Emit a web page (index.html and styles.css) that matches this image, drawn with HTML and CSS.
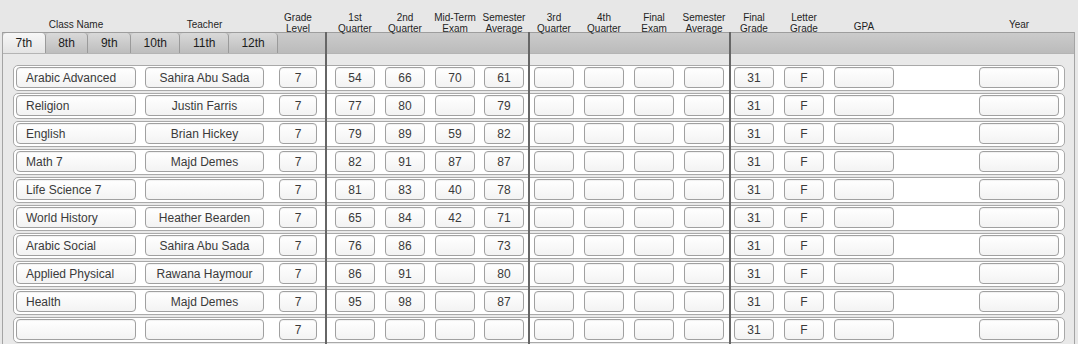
FILE: index.html
```html
<!DOCTYPE html>
<html>
<head>
<meta charset="utf-8">
<link rel="stylesheet" href="styles.css">
</head>
<body>
<div class="sheet">
  <div class="head cols">
    <div class="h one c-name">Class Name</div>
    <div class="h one c-teacher">Teacher</div>
    <div class="h two c-grade"><span>Grade</span><span>Level</span></div>
    <div class="h two c-num"><span>1st</span><span>Quarter</span></div>
    <div class="h two c-num"><span>2nd</span><span>Quarter</span></div>
    <div class="h two c-num"><span>Mid-Term</span><span>Exam</span></div>
    <div class="h two c-num"><span>Semester</span><span>Average</span></div>
    <div class="h two c-num"><span>3rd</span><span>Quarter</span></div>
    <div class="h two c-num"><span>4th</span><span>Quarter</span></div>
    <div class="h two c-num"><span>Final</span><span>Exam</span></div>
    <div class="h two c-num"><span>Semester</span><span>Average</span></div>
    <div class="h two c-num"><span>Final</span><span>Grade</span></div>
    <div class="h two c-num"><span>Letter</span><span>Grade</span></div>
    <div class="h low c-gpa">GPA</div>
    <div class="h one c-year">Year</div>
  </div>

  <div class="panel">
    <div class="tabs">
      <div class="tab active">7th</div>
      <div class="tab">8th</div>
      <div class="tab">9th</div>
      <div class="tab">10th</div>
      <div class="tab">11th</div>
      <div class="tab">12th</div>
      <div class="tab-fill"></div>
    </div>

    <div class="rows">
      <div class="row cols">
        <div class="f left c-name">Arabic Advanced</div><div class="f c-teacher">Sahira Abu Sada</div><div class="f c-grade">7</div>
        <div class="f c-num">54</div><div class="f c-num">66</div><div class="f c-num">70</div><div class="f c-num">61</div>
        <div class="f c-num"></div><div class="f c-num"></div><div class="f c-num"></div><div class="f c-num"></div>
        <div class="f c-num">31</div><div class="f c-num">F</div><div class="f c-gpa"></div><div class="f c-year"></div>
      </div>
      <div class="row cols">
        <div class="f left c-name">Religion</div><div class="f c-teacher">Justin Farris</div><div class="f c-grade">7</div>
        <div class="f c-num">77</div><div class="f c-num">80</div><div class="f c-num"></div><div class="f c-num">79</div>
        <div class="f c-num"></div><div class="f c-num"></div><div class="f c-num"></div><div class="f c-num"></div>
        <div class="f c-num">31</div><div class="f c-num">F</div><div class="f c-gpa"></div><div class="f c-year"></div>
      </div>
      <div class="row cols">
        <div class="f left c-name">English</div><div class="f c-teacher">Brian Hickey</div><div class="f c-grade">7</div>
        <div class="f c-num">79</div><div class="f c-num">89</div><div class="f c-num">59</div><div class="f c-num">82</div>
        <div class="f c-num"></div><div class="f c-num"></div><div class="f c-num"></div><div class="f c-num"></div>
        <div class="f c-num">31</div><div class="f c-num">F</div><div class="f c-gpa"></div><div class="f c-year"></div>
      </div>
      <div class="row cols">
        <div class="f left c-name">Math 7</div><div class="f c-teacher">Majd Demes</div><div class="f c-grade">7</div>
        <div class="f c-num">82</div><div class="f c-num">91</div><div class="f c-num">87</div><div class="f c-num">87</div>
        <div class="f c-num"></div><div class="f c-num"></div><div class="f c-num"></div><div class="f c-num"></div>
        <div class="f c-num">31</div><div class="f c-num">F</div><div class="f c-gpa"></div><div class="f c-year"></div>
      </div>
      <div class="row cols">
        <div class="f left c-name">Life Science 7</div><div class="f c-teacher"></div><div class="f c-grade">7</div>
        <div class="f c-num">81</div><div class="f c-num">83</div><div class="f c-num">40</div><div class="f c-num">78</div>
        <div class="f c-num"></div><div class="f c-num"></div><div class="f c-num"></div><div class="f c-num"></div>
        <div class="f c-num">31</div><div class="f c-num">F</div><div class="f c-gpa"></div><div class="f c-year"></div>
      </div>
      <div class="row cols">
        <div class="f left c-name">World History</div><div class="f c-teacher">Heather Bearden</div><div class="f c-grade">7</div>
        <div class="f c-num">65</div><div class="f c-num">84</div><div class="f c-num">42</div><div class="f c-num">71</div>
        <div class="f c-num"></div><div class="f c-num"></div><div class="f c-num"></div><div class="f c-num"></div>
        <div class="f c-num">31</div><div class="f c-num">F</div><div class="f c-gpa"></div><div class="f c-year"></div>
      </div>
      <div class="row cols">
        <div class="f left c-name">Arabic Social</div><div class="f c-teacher">Sahira Abu Sada</div><div class="f c-grade">7</div>
        <div class="f c-num">76</div><div class="f c-num">86</div><div class="f c-num"></div><div class="f c-num">73</div>
        <div class="f c-num"></div><div class="f c-num"></div><div class="f c-num"></div><div class="f c-num"></div>
        <div class="f c-num">31</div><div class="f c-num">F</div><div class="f c-gpa"></div><div class="f c-year"></div>
      </div>
      <div class="row cols">
        <div class="f left c-name">Applied Physical</div><div class="f c-teacher">Rawana Haymour</div><div class="f c-grade">7</div>
        <div class="f c-num">86</div><div class="f c-num">91</div><div class="f c-num"></div><div class="f c-num">80</div>
        <div class="f c-num"></div><div class="f c-num"></div><div class="f c-num"></div><div class="f c-num"></div>
        <div class="f c-num">31</div><div class="f c-num">F</div><div class="f c-gpa"></div><div class="f c-year"></div>
      </div>
      <div class="row cols">
        <div class="f left c-name">Health</div><div class="f c-teacher">Majd Demes</div><div class="f c-grade">7</div>
        <div class="f c-num">95</div><div class="f c-num">98</div><div class="f c-num"></div><div class="f c-num">87</div>
        <div class="f c-num"></div><div class="f c-num"></div><div class="f c-num"></div><div class="f c-num"></div>
        <div class="f c-num">31</div><div class="f c-num">F</div><div class="f c-gpa"></div><div class="f c-year"></div>
      </div>
      <div class="row cols">
        <div class="f left c-name"></div><div class="f c-teacher"></div><div class="f c-grade">7</div>
        <div class="f c-num"></div><div class="f c-num"></div><div class="f c-num"></div><div class="f c-num"></div>
        <div class="f c-num"></div><div class="f c-num"></div><div class="f c-num"></div><div class="f c-num"></div>
        <div class="f c-num">31</div><div class="f c-num">F</div><div class="f c-gpa"></div><div class="f c-year"></div>
      </div>
    </div>
  </div>

  <div class="divider d1"></div>
  <div class="divider d2"></div>
  <div class="divider d3"></div>
</div>
</body>
</html>
```

FILE: styles.css
```css
* { box-sizing: border-box; }

body {
  margin: 0;
  background: #e7e7e7;
  font-family: "Liberation Sans", Arial, Helvetica, sans-serif;
  color: #222;
}

.sheet {
  position: relative;
  width: 1078px;
  height: 344px;
  overflow: hidden;
}

.cols {
  display: grid;
  grid-template-columns: 120px 128px 53px 58px 50px 50px 49px 50px 50px 50px 50px 50px 50px 70px 165px;
}

.c-name { width: 120px; }
.c-teacher { width: 119px; }
.c-grade { width: 38px; }
.c-num { width: 40px; }
.c-gpa { width: 60px; }
.c-year { width: 80px; }

/* header labels */
.head {
  height: 32px;
  padding-left: 16px;
  align-items: end;
  font-size: 10px;
  line-height: 11px;
  color: #1f1f1f;
}
.h {
  justify-self: end;
  display: flex;
  flex-direction: column;
  align-items: center;
  white-space: nowrap;
}
.h.one { margin-bottom: 2px; }
.h.two { margin-bottom: -2px; }
.h.low { margin-bottom: 0; }

/* panel */
.panel {
  margin-left: 2px;
  width: 1073px;
  height: 312px;
  border-left: 1px solid #a4a4a4;
  border-right: 1px solid #a4a4a4;
  background: #e9e9e9;
}

.tabs {
  display: flex;
  height: 22px;
  border-top: 1px solid #9d9d9d;
  border-bottom: 1px solid #b4b4b4;
  background: linear-gradient(#cbcbcb, #bbbbbb);
}
.tab {
  padding: 0 12.5px;
  border-right: 1px solid #9a9a9a;
  border-radius: 4px 4px 0 0;
  background: linear-gradient(#d9d9d9, #bdbdbd);
  font-size: 12px;
  line-height: 20px;
  color: #1c1c1c;
}
.tab.active {
  background: linear-gradient(#f7f7f7, #e4e4e4);
}
.tab-fill { flex: 1; }

/* rows */
.rows {
  display: flex;
  flex-direction: column;
  gap: 2px;
  padding: 11px 9px 0 10px;
}
.row {
  background: #fff;
  border: 1px solid #a9a9a9;
  border-radius: 5px;
  padding: 1px 5px 2px 2px;
}
.f {
  justify-self: end;
  height: 21px;
  border: 1px solid #a0a0a0;
  border-radius: 4px;
  background: linear-gradient(#ffffff, #f3f3f3);
  box-shadow: inset 0 1px 1px rgba(0, 0, 0, 0.06);
  font-size: 12px;
  line-height: 14px;
  padding: 3px 3px 0;
  text-align: center;
  color: #3a3a3a;
  white-space: nowrap;
  overflow: hidden;
}
.f.left {
  text-align: left;
  padding-left: 9px;
}

/* column separators drawn over the tab bar and rows */
.divider {
  position: absolute;
  top: 32px;
  bottom: 0;
  width: 2px;
  background: #666;
}
.d1 { left: 325px; }
.d2 { left: 528px; }
.d3 { left: 729px; }
```
